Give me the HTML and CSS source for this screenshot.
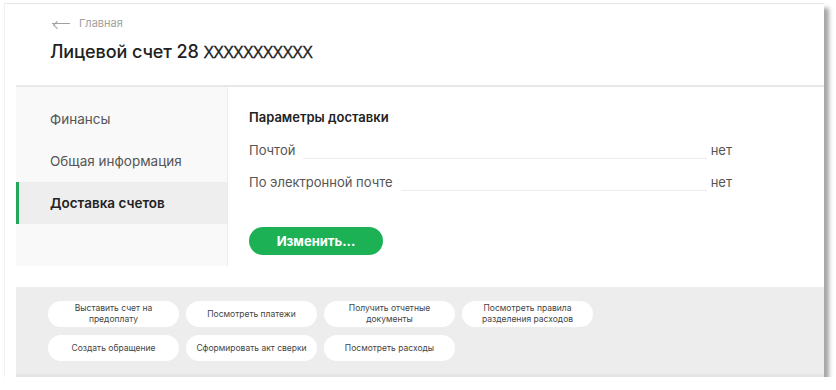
FILE: index.html
```html
<!DOCTYPE html>
<html lang="ru">

<head>
	<meta charset="utf-8">
	<meta name="viewport" content="width=device-width, initial-scale=1">
	<title>Лицевой счет</title>
	<link rel="stylesheet" href="styles.css">
</head>

<body>
	<div class="card">
		<header>
			<a class="crumb" href="#"><span class="arrow"></span>Главная</a>
			<h1>Лицевой счет 28 <span class="mask">XXXXXXXXXXX</span></h1>
		</header>
		<div class="panel">
			<nav class="side">
				<ul>
					<li><a href="#">Финансы</a></li>
					<li><a href="#">Общая информация</a></li>
					<li class="active"><a href="#">Доставка счетов</a></li>
				</ul>
			</nav>
			<section class="content">
				<h2>Параметры доставки</h2>
				<div class="row">
					<span class="label">Почтой</span>
					<span class="dots"></span>
					<span class="value">нет</span>
				</div>
				<div class="row">
					<span class="label">По электронной почте</span>
					<span class="dots"></span>
					<span class="value">нет</span>
				</div>
				<button class="btn">Изменить...</button>
			</section>
		</div>
		<div class="actions">
			<a class="pill" href="#">Выставить счет на<br>предоплату</a>
			<a class="pill" href="#">Посмотреть платежи</a>
			<a class="pill" href="#">Получить отчетные<br>документы</a>
			<a class="pill" href="#">Посмотреть правила<br>разделения расходов</a>
			<a class="pill" href="#">Создать обращение</a>
			<a class="pill" href="#">Сформировать акт сверки</a>
			<a class="pill" href="#">Посмотреть расходы</a>
		</div>
	</div>
</body>

</html>
```

FILE: styles.css
```css
* {
	box-sizing: border-box;
}

body,
html {
	margin: 0;
	background: #fff;
	font-family: Inter, "Noto Sans", sans-serif;
	color: #222;
}

body {
	padding: 3px 0 0 4px;
}

a {
	text-decoration: none;
	color: inherit;
}

.card {
	width: 820px;
	height: 374px;
	background: #fff;
	border-top: 1px solid #e6e6e6;
	border-left: 1px solid #f0f0f0;
	box-shadow: 5px 5px 4px rgba(0, 0, 0, .35);
	display: flex;
	flex-direction: column;
}

header {
	height: 81px;
	padding: 11px 0 0 45px;
}

.crumb {
	display: flex;
	align-items: center;
	gap: 9px;
	font-size: 11px;
	color: #a0a0a0;
	height: 16px;
	padding-left: 2px;
}

.arrow {
	position: relative;
	width: 18px;
	height: 1px;
	background: #a0a0a0;
}

.arrow:before {
	content: "";
	position: absolute;
	top: -4px;
	left: 1px;
	width: 5px;
	height: 5px;
	border-left: 1px solid #a0a0a0;
	border-bottom: 1px solid #a0a0a0;
	transform: rotate(45deg);
	transform-origin: 0 100%;
}

h1 {
	margin: 10px 0 0;
	font-size: 18px;
	font-weight: 500;
	letter-spacing: -.1px;
}

.mask {
	font-family: "Liberation Sans", sans-serif;
	font-size: 16px;
	letter-spacing: -.8px;
	-webkit-text-stroke: .3px #222;
}

.panel {
	display: flex;
	margin-left: 11px;
	border-top: 2px solid #e8e8e8;
	height: 181px;
}

.side {
	width: 212px;
	background: #f9f9f9;
	border-right: 1px solid #ececec;
	padding-top: 11px;
}

.side ul {
	list-style: none;
	margin: 0;
	padding: 0;
}

.side li a {
	display: flex;
	align-items: center;
	height: 42px;
	padding-left: 31px;
	font-size: 13.5px;
	color: #555;
	border-left: 3px solid transparent;
}

.side li.active a {
	background: #eeeeee;
	border-left-color: #21a85a;
	color: #222;
	font-weight: 600;
}

.content {
	flex: 1;
	padding: 22px 0 0 21px;
}

h2 {
	margin: 0 0 17px;
	font-size: 13px;
	font-weight: 600;
}

.row {
	display: flex;
	align-items: flex-end;
	height: 32px;
	font-size: 13px;
	color: #555;
	width: 483px;
	padding-bottom: 8px;
}

.row:first-of-type {
	height: auto;
}

.dots {
	flex: 1;
	border-bottom: 1px solid #ececec;
	margin: 0 4px -1px 8px;
	align-self: flex-end;
}

.btn {
	margin-top: 29px;
	width: 134px;
	height: 28px;
	border: none;
	border-radius: 14px;
	background: #1db156;
	color: #fff;
	font-family: inherit;
	font-size: 13px;
	font-weight: 700;
}

.actions {
	margin: 21px 0 0 11px;
	flex: 1;
	background: #ededed;
	border-bottom: 3px solid #e4e4e4;
	padding: 14px 0 0 32px;
	display: grid;
	grid-template-columns: repeat(4, 131px);
	grid-auto-rows: 26px;
	gap: 8px 7px;
	align-content: start;
}

.pill {
	display: flex;
	align-items: center;
	justify-content: center;
	text-align: center;
	background: #fff;
	border-radius: 13px;
	font-size: 8.5px;
	line-height: 11px;
	color: #444;
}
```
